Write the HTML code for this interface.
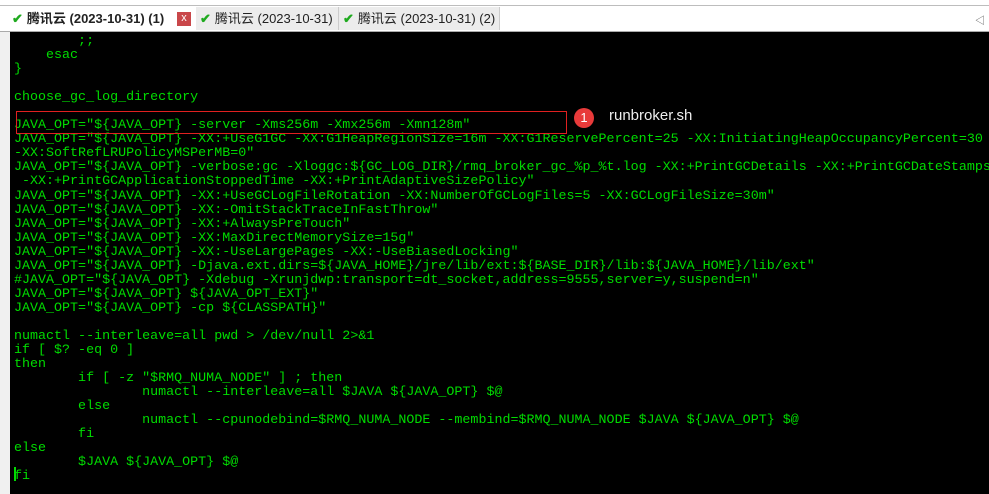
<!DOCTYPE html>
<html><head><meta charset="utf-8"><style>
body{margin:0;width:989px;height:494px;overflow:hidden;background:#f0f0f0;position:relative;font-family:"Liberation Sans","Noto Sans CJK SC",sans-serif}
.top{position:absolute;left:0;top:0;width:989px;height:5px;background:#fff;border-bottom:1px solid #bdbdbd}
.bar{position:absolute;left:0;top:6px;width:989px;height:25px;background:#fff;border-bottom:1px solid #aaa}
.tab{position:absolute;top:7px;height:23px;font-size:13px;line-height:23px;color:#222;background:#ececec;border-right:1px solid #ccc}
.tab b{font-weight:bold}
.chk{color:#1faa1f;font-weight:bold;margin:0 4px 0 4px}
.x{position:absolute;left:177px;top:12px;width:14px;height:14px;background:#c9474a;color:#fff;font-size:11px;line-height:13px;text-align:center}
.term{position:absolute;left:10px;top:32px;width:979px;height:462px;background:#000}
pre{position:absolute;left:14px;top:35px;margin:0;font-family:"Liberation Mono",monospace;font-size:13.35px;line-height:14.05px;color:#00dc00;white-space:pre}
.box{position:absolute;left:16px;top:111px;width:549px;height:21px;border:1px solid #e02020}
.badge{position:absolute;left:574px;top:108px;width:20px;height:20px;border-radius:50%;background:#e83a3a;color:#fff;font-size:13px;line-height:20px;text-align:center}
.lbl{position:absolute;left:609px;top:107px;color:#eee;font-size:15px}
.cur{position:absolute;left:14px;top:467px;width:2px;height:14px;background:#00dc00}
</style></head><body>
<div class="top"></div>
<div class="bar"></div>
<div class="tab" style="left:8px;width:188px;background:#fff"><span class="chk">✔</span><b>腾讯云 (2023-10-31) (1)</b></div>
<div class="x">x</div>
<div class="tab" style="left:196px;width:142px"><span class="chk">✔</span>腾讯云 (2023-10-31)</div>
<div class="tab" style="left:339px;width:160px"><span class="chk">✔</span>腾讯云 (2023-10-31) (2)</div>
<div style="position:absolute;left:975px;top:12px;font-size:10px;color:#555">◁</div>
<div class="term"></div>
<pre>        ;;
    esac
}

choose_gc_log_directory

JAVA_OPT="${JAVA_OPT} -server -Xms256m -Xmx256m -Xmn128m"
JAVA_OPT="${JAVA_OPT} -XX:+UseG1GC -XX:G1HeapRegionSize=16m -XX:G1ReservePercent=25 -XX:InitiatingHeapOccupancyPercent=30
-XX:SoftRefLRUPolicyMSPerMB=0"
JAVA_OPT="${JAVA_OPT} -verbose:gc -Xloggc:${GC_LOG_DIR}/rmq_broker_gc_%p_%t.log -XX:+PrintGCDetails -XX:+PrintGCDateStamps
 -XX:+PrintGCApplicationStoppedTime -XX:+PrintAdaptiveSizePolicy"
JAVA_OPT="${JAVA_OPT} -XX:+UseGCLogFileRotation -XX:NumberOfGCLogFiles=5 -XX:GCLogFileSize=30m"
JAVA_OPT="${JAVA_OPT} -XX:-OmitStackTraceInFastThrow"
JAVA_OPT="${JAVA_OPT} -XX:+AlwaysPreTouch"
JAVA_OPT="${JAVA_OPT} -XX:MaxDirectMemorySize=15g"
JAVA_OPT="${JAVA_OPT} -XX:-UseLargePages -XX:-UseBiasedLocking"
JAVA_OPT="${JAVA_OPT} -Djava.ext.dirs=${JAVA_HOME}/jre/lib/ext:${BASE_DIR}/lib:${JAVA_HOME}/lib/ext"
#JAVA_OPT="${JAVA_OPT} -Xdebug -Xrunjdwp:transport=dt_socket,address=9555,server=y,suspend=n"
JAVA_OPT="${JAVA_OPT} ${JAVA_OPT_EXT}"
JAVA_OPT="${JAVA_OPT} -cp ${CLASSPATH}"

numactl --interleave=all pwd &gt; /dev/null 2&gt;&amp;1
if [ $? -eq 0 ]
then
        if [ -z "$RMQ_NUMA_NODE" ] ; then
                numactl --interleave=all $JAVA ${JAVA_OPT} $@
        else
                numactl --cpunodebind=$RMQ_NUMA_NODE --membind=$RMQ_NUMA_NODE $JAVA ${JAVA_OPT} $@
        fi
else
        $JAVA ${JAVA_OPT} $@
fi</pre>
<div class="cur"></div>
<div class="box"></div>
<div class="badge">1</div>
<div class="lbl">runbroker.sh</div>
</body></html>
